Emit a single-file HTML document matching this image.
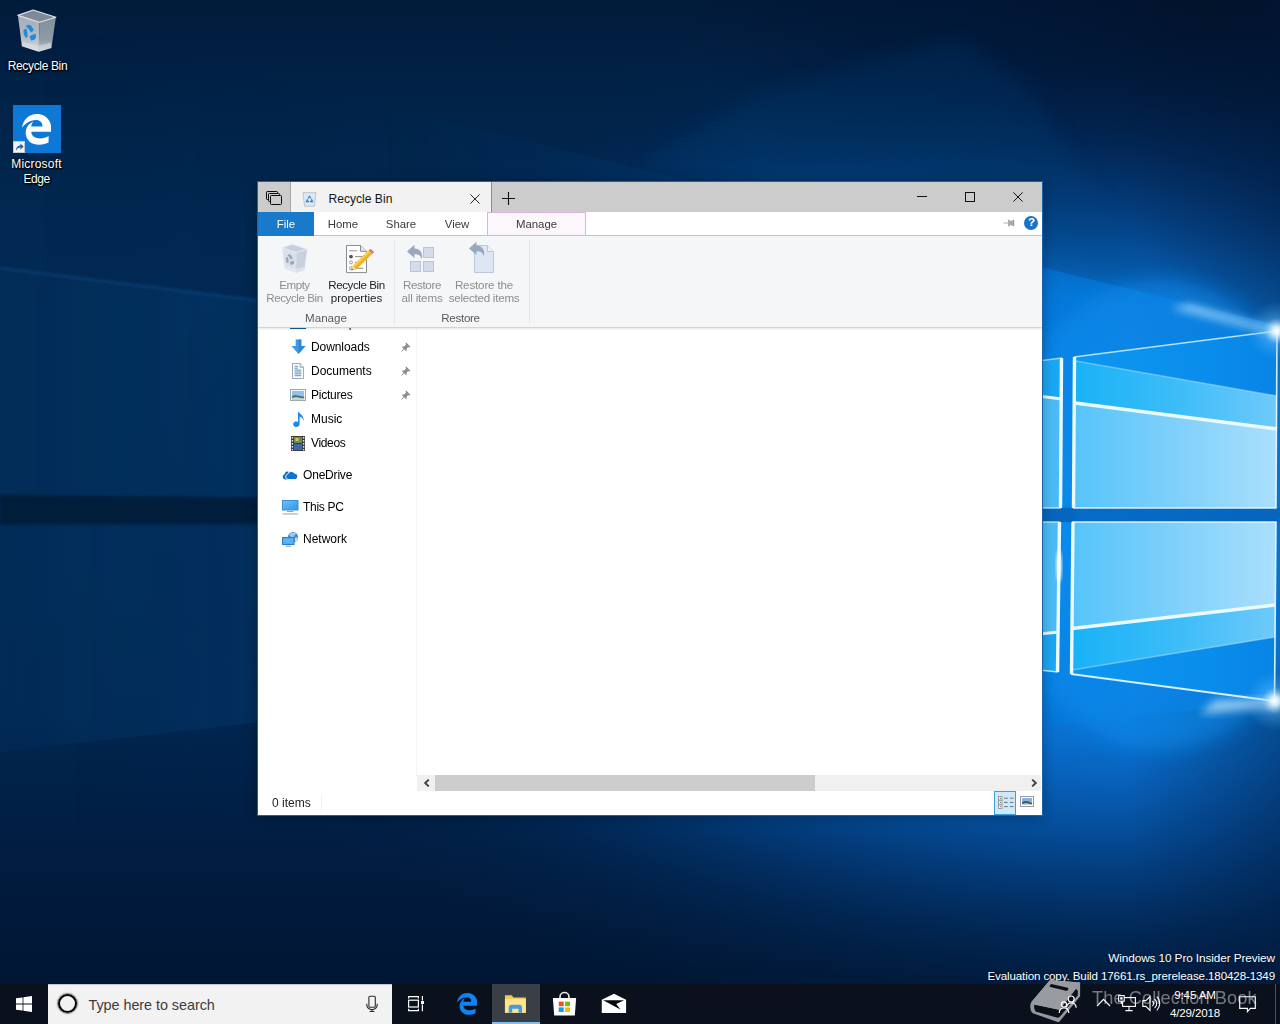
<!DOCTYPE html>
<html lang="en">
<head>
<meta charset="utf-8">
<title>Recycle Bin</title>
<style>
html,body{margin:0;padding:0;}
body{width:1280px;height:1024px;overflow:hidden;position:relative;background:#04244f;font-family:"Liberation Sans",sans-serif;font-size:12px;color:#000;}
.abs{position:absolute;}
.t{position:absolute;white-space:nowrap;line-height:1;}
.c{text-align:center;}
#wall{position:absolute;left:0;top:0;width:1280px;height:1024px;}
/* desktop icons */
.dlabel{position:absolute;color:#fff;text-align:center;white-space:nowrap;font-size:12px;line-height:15.5px;text-shadow:0 1px 2px rgba(0,0,0,.9),0 0 3px rgba(0,0,0,.7),1px 1px 1px rgba(0,0,0,.8);}
/* window */
#win{position:absolute;left:257px;top:181px;width:784px;height:633px;border:1px solid #1c62a8;background:#fff;overflow:hidden;box-shadow:0 1px 12px rgba(0,0,0,.28);}
#titlebar{position:absolute;left:0;top:0;width:784px;height:30px;background:#cccccc;}
#tabstrip{position:absolute;left:0;top:30px;width:784px;height:23px;background:#fff;}
#ribbonline{position:absolute;left:56px;top:53px;width:728px;height:1px;background:#dcb0e2;}
#ribbon{position:absolute;left:0;top:54px;width:784px;height:91px;background:#f5f6f7;border-bottom:1px solid #d3d4d5;}
#ribbonshadow{position:absolute;left:0;top:146px;width:784px;height:3px;background:linear-gradient(rgba(0,0,0,.09),rgba(0,0,0,.03) 50%,rgba(0,0,0,0));}
.rtab{position:absolute;top:30px;height:23px;line-height:24px;font-size:11.4px;color:#3a3a3a;text-align:center;}
.rbtxt{position:absolute;text-align:center;white-space:nowrap;font-size:11.6px;line-height:13px;color:#8d8d8d;}
.glabel{position:absolute;text-align:center;white-space:nowrap;font-size:11.6px;color:#5a5a5a;line-height:13px;}
.nav{position:absolute;white-space:nowrap;font-size:12px;line-height:14px;color:#000;}
/* taskbar */
#taskbar{position:absolute;left:0;top:984px;width:1280px;height:40px;background:#0a111c;}
#search{position:absolute;left:48px;top:0;width:344px;height:40px;background:#f2f2f2;}
</style>
</head>
<body>
<svg id="wall" width="1280" height="1024" viewBox="0 0 1280 1024">
<defs>
<linearGradient id="base" x1="0" y1="0" x2="0" y2="1024" gradientUnits="userSpaceOnUse">
<stop offset="0" stop-color="#011b3b"/><stop offset="0.1" stop-color="#012348"/><stop offset="0.2" stop-color="#012850"/><stop offset="0.3" stop-color="#012a53"/><stop offset="0.5" stop-color="#012a54"/><stop offset="0.7" stop-color="#012750"/><stop offset="0.8" stop-color="#011f44"/><stop offset="0.96" stop-color="#011634"/><stop offset="1" stop-color="#011634"/>
</linearGradient>
<radialGradient id="corner" cx="1210" cy="0" r="520" gradientUnits="userSpaceOnUse" gradientTransform="translate(1210 0) scale(1 0.6) translate(-1210 0)">
<stop offset="0" stop-color="#010f24" stop-opacity=".7"/><stop offset="0.45" stop-color="#011230" stop-opacity=".5"/><stop offset="0.75" stop-color="#011230" stop-opacity=".28"/><stop offset="1" stop-color="#011330" stop-opacity="0"/>
</radialGradient>
<radialGradient id="glow" cx="1130" cy="515" r="530" gradientUnits="userSpaceOnUse" gradientTransform="translate(1130 515) scale(1.9 1) translate(-1130 -515)">
<stop offset="0" stop-color="#0a8aea"/><stop offset="0.3" stop-color="#0b7ee2"/><stop offset="0.42" stop-color="#0a70d0"/><stop offset="0.5" stop-color="#0861ba"/><stop offset="0.595" stop-color="#054d9a"/><stop offset="0.69" stop-color="#033b7a" stop-opacity=".95"/><stop offset="0.78" stop-color="#022d60" stop-opacity=".8"/><stop offset="0.88" stop-color="#01244e" stop-opacity=".45"/><stop offset="1" stop-color="#012248" stop-opacity="0"/>
</radialGradient>
<linearGradient id="fadeR" x1="1130" y1="0" x2="1280" y2="0" gradientUnits="userSpaceOnUse">
<stop offset="0" stop-color="#011a3c" stop-opacity="0"/><stop offset="1" stop-color="#011a3c" stop-opacity=".42"/>
</linearGradient>
<linearGradient id="sheetU" x1="0" y1="0" x2="1100" y2="0" gradientUnits="userSpaceOnUse">
<stop offset="0" stop-color="#02386c" stop-opacity=".2"/><stop offset="0.45" stop-color="#06488a" stop-opacity=".45"/><stop offset="0.8" stop-color="#0c6cc8" stop-opacity=".45"/><stop offset="1" stop-color="#1088ee" stop-opacity=".4"/>
</linearGradient>
<linearGradient id="sheetL" x1="0" y1="0" x2="1100" y2="0" gradientUnits="userSpaceOnUse">
<stop offset="0" stop-color="#02366a" stop-opacity=".22"/><stop offset="0.45" stop-color="#06468a" stop-opacity=".4"/><stop offset="0.8" stop-color="#0c6cc8" stop-opacity=".4"/><stop offset="1" stop-color="#1088ee" stop-opacity=".35"/>
</linearGradient>
<linearGradient id="wedgeU" x1="0" y1="0" x2="1280" y2="0" gradientUnits="userSpaceOnUse">
<stop offset="0" stop-color="#03386e" stop-opacity="0"/><stop offset="0.3" stop-color="#03386e" stop-opacity=".05"/><stop offset="0.5" stop-color="#043c78" stop-opacity=".5"/><stop offset="0.78" stop-color="#0a6cc8" stop-opacity=".55"/><stop offset="1" stop-color="#0e86ea" stop-opacity=".7"/>
</linearGradient>
<linearGradient id="bandg" x1="0" y1="0" x2="1075" y2="0" gradientUnits="userSpaceOnUse">
<stop offset="0" stop-color="#011632" stop-opacity=".8"/><stop offset="0.55" stop-color="#011a3c" stop-opacity=".75"/><stop offset="1" stop-color="#0650a4" stop-opacity=".7"/>
</linearGradient>
<linearGradient id="zLight" x1="1072" y1="0" x2="1277" y2="0" gradientUnits="userSpaceOnUse">
<stop offset="0" stop-color="#56c4fa"/><stop offset="0.5" stop-color="#7ed0fb"/><stop offset="1" stop-color="#abdffd"/>
</linearGradient>
<linearGradient id="zMid" x1="1072" y1="0" x2="1277" y2="0" gradientUnits="userSpaceOnUse">
<stop offset="0" stop-color="#18b2f6"/><stop offset="0.5" stop-color="#3cbcf8"/><stop offset="1" stop-color="#6ecafa"/>
</linearGradient>
<linearGradient id="zDark" x1="1072" y1="0" x2="1277" y2="0" gradientUnits="userSpaceOnUse">
<stop offset="0" stop-color="#0c98f0"/><stop offset="0.6" stop-color="#0a8eec"/><stop offset="1" stop-color="#0884e6"/>
</linearGradient>
<radialGradient id="flare"><stop offset="0" stop-color="#fff" stop-opacity="1"/><stop offset="0.15" stop-color="#e2f5ff" stop-opacity=".9"/><stop offset="0.45" stop-color="#7cc8ff" stop-opacity=".35"/><stop offset="1" stop-color="#49b0ff" stop-opacity="0"/></radialGradient>
<filter id="b1" x="-5%" y="-30%" width="110%" height="160%"><feGaussianBlur stdDeviation="0.7"/></filter>
<filter id="b2" x="-10%" y="-30%" width="120%" height="160%"><feGaussianBlur stdDeviation="1.6"/></filter>
<filter id="b4" x="-10%" y="-30%" width="120%" height="160%"><feGaussianBlur stdDeviation="4"/></filter>
<filter id="b10" x="-20%" y="-40%" width="140%" height="180%"><feGaussianBlur stdDeviation="10"/></filter>
<linearGradient id="wedgeR" x1="860" y1="0" x2="1280" y2="0" gradientUnits="userSpaceOnUse">
<stop offset="0" stop-color="#0c84ea" stop-opacity="0"/><stop offset="0.45" stop-color="#0c84ea" stop-opacity=".3"/><stop offset="1" stop-color="#0c84ea" stop-opacity=".42"/>
</linearGradient>
</defs>
<rect width="1280" height="1024" fill="url(#base)"/>
<!-- main glow -->
<rect width="1280" height="1024" fill="url(#glow)"/>
<rect x="1130" width="150" height="1024" fill="url(#fadeR)"/>
<rect width="1280" height="320" fill="url(#corner)"/>
<!-- secondary faint beam above -->
<polygon points="1043,268 1160,296 1030,90 960,40 760,90 640,166" fill="#05447e" opacity=".22" filter="url(#b10)"/>
<!-- wedge below the outer upper line (0,12)->(1277,325) down to the sheet -->
<polygon points="0,12 1277,325 1277,430 0,268" fill="url(#wedgeU)" opacity=".55" filter="url(#b1)"/>
<!-- wedge above the outer lower line -->
<polygon points="0,834 1275,701 1277,606 0,752" fill="url(#wedgeU)" opacity=".38" filter="url(#b1)"/>
<!-- light sheet -->
<polygon points="0,268 1100,405 1100,508 0,494" fill="url(#sheetU)" filter="url(#b1)"/>
<polygon points="0,526 1100,522 1100,626 0,752" fill="url(#sheetL)" filter="url(#b1)"/>
<line x1="0" y1="268" x2="1075" y2="402" stroke="#2a7cd0" stroke-width="2" opacity=".26" filter="url(#b2)"/>
<!-- mullion shadow band -->
<polygon points="0,495 1075,507 1075,522 0,524" fill="url(#bandg)" filter="url(#b2)"/>
<polygon points="1277,325 860,223 860,420 1277,420" fill="url(#wedgeR)" filter="url(#b1)"/>
<polygon points="1275,702 860,745 860,620 1277,620" fill="url(#wedgeR)" opacity=".8" filter="url(#b1)"/>
<!-- bright azure immediately around the logo -->
<ellipse cx="1160" cy="515" rx="170" ry="235" fill="#0a8cec" opacity=".55" filter="url(#b10)"/>
<!-- logo panes -->
<g>
<!-- upper right -->
<polygon points="1074,357 1277,331 1276,508 1073,508" fill="url(#zLight)"/>
<polygon points="1074,357 1277,331 1277,429 1075,403" fill="url(#zMid)"/>
<polygon points="1074,357 1277,331 1277,396 1076,361" fill="url(#zDark)"/>
<!-- lower right -->
<polygon points="1072,522 1276,522 1274,701 1071,674" fill="url(#zLight)"/>
<polygon points="1072,628.5 1275,605 1274,701 1071,674" fill="url(#zMid)"/>
<polygon points="1072,670 1275,637 1274,701 1071,674" fill="url(#zDark)"/>
<!-- left slivers -->
<polygon points="1030,362 1062,358 1061,508 1030,508" fill="#4cbcf8"/>
<polygon points="1030,362 1062,358 1062,399 1030,395" fill="#1aa8f4"/>
<polygon points="1030,522 1060,522 1058,672 1030,669" fill="#4cbcf8"/>
<polygon points="1030,635 1059,632 1058,672 1030,669" fill="#1aa8f4"/>
<!-- mullions -->
<polygon points="1030,508 1280,508 1280,522 1030,522" fill="#0660b8" opacity=".75"/>
</g>
<!-- edge glows -->
<g fill="none" stroke="#eafaff" filter="url(#b1)">
<polyline points="1074.5,357 1073.5,508" stroke-width="3.4"/>
<polyline points="1073,522 1071.5,674" stroke-width="3.4"/>
<polyline points="1074,357 1277,331" stroke-width="1.6" opacity=".75"/>
<polyline points="1277,331 1276,508 1073,508" stroke-width="1.6" opacity=".9"/>
<polyline points="1072,522 1276,522 1274.5,701" stroke-width="1.6" opacity=".9"/>
<polyline points="1071,674 1274,701" stroke-width="2" opacity=".9"/>
<polyline points="1030,362 1062,358" stroke-width="1.4" opacity=".6"/>
<polyline points="1061.5,358 1060.5,508" stroke-width="3.4"/>
<polyline points="1061,508 1030,508" stroke-width="1.4" opacity=".8"/>
<polyline points="1030,522 1060,522" stroke-width="1.4" opacity=".8"/>
<polyline points="1059.5,522 1057.5,672" stroke-width="3.4"/>
<polyline points="1058,672 1030,669" stroke-width="1.6" opacity=".8"/>
<line x1="1075" y1="403" x2="1277" y2="429" stroke-width="3.6"/>
<line x1="1072" y1="628.5" x2="1275" y2="605" stroke-width="3.6"/>
<line x1="1076" y1="361" x2="1277" y2="396" stroke-width="1.6" opacity=".35"/>
<line x1="1072" y1="670" x2="1275" y2="637" stroke-width="1.6" opacity=".35"/>
<line x1="1030" y1="395" x2="1062" y2="399" stroke-width="3"/>
<line x1="1030" y1="635" x2="1059" y2="632" stroke-width="3"/>
</g>
<ellipse cx="1059" cy="566" rx="3" ry="16" fill="#fff" opacity=".8" filter="url(#b2)"/>
<!-- corner flares + streaks -->
<polygon points="1277,329 1190,304 1170,308 1277,335" fill="#d8f0ff" opacity=".6" filter="url(#b4)"/>
<polygon points="1275,699 1215,700 1200,714 1275,707" fill="#d8f0ff" opacity=".65" filter="url(#b4)"/>
<circle cx="1277" cy="331" r="30" fill="url(#flare)"/>
<circle cx="1275" cy="701" r="30" fill="url(#flare)"/>
</svg>
<!-- Recycle Bin desktop icon: x 17..56, y 10..52 -->
<svg class="abs" style="left:10px;top:4px" width="56" height="54" viewBox="0 0 1062 1024">
 <defs>
  <linearGradient id="rbL" x1="0" y1="0" x2="0" y2="1"><stop offset="0" stop-color="#aab3bd"/><stop offset=".6" stop-color="#b9c0c8"/><stop offset="1" stop-color="#dcdfe2"/></linearGradient>
  <linearGradient id="rbR" x1="0" y1="0" x2="0" y2="1"><stop offset="0" stop-color="#8793a0"/><stop offset=".65" stop-color="#939eaa"/><stop offset="1" stop-color="#cdd2d6"/></linearGradient>
 </defs>
 <polygon points="150,215 440,115 870,250 560,345" fill="#7f8a98"/>
 <polygon points="150,215 560,345 545,905 225,800" fill="url(#rbL)" opacity=".97"/>
 <polygon points="560,345 870,250 785,835 545,905" fill="url(#rbR)" opacity=".97"/>
 <polygon points="240,720 545,790 770,735 785,835 545,905 225,800" fill="#e6e8ea" opacity=".45"/>
 <polygon points="150,215 440,115 870,250 560,345" fill="none" stroke="#dfe4e8" stroke-width="22" stroke-linejoin="round"/>
 <g fill="#1f8bd9">
  <path d="M300 420 Q345 375 400 410 L455 500 L400 540 L350 470 Z"/>
  <path d="M255 500 Q285 455 320 480 L335 600 Q330 650 295 640 Q250 590 255 500 Z"/>
  <path d="M370 610 L470 565 Q500 575 490 640 Q470 690 400 690 Z"/>
 </g>
</svg>
<div class="dlabel" style="left:-2.5px;top:58.5px;width:80px;letter-spacing:-.35px">Recycle Bin</div>
<!-- Edge desktop icon -->
<div class="abs" style="left:13px;top:105px;width:48px;height:48px;background:#0d78d6"></div>
<svg class="abs" style="left:21.9px;top:114px" width="29.3" height="30.8" viewBox="25 8 462 496" preserveAspectRatio="none"><path fill="#fff" d="M25.71 228.16l.35-.48c0 .16 0 .32-.07.48zm460.58 15.51c0-44-7.76-84.46-28.81-122.4C416.5 47.88 343.91 8 258.89 8 119 7.72 40.62 113.21 26.06 227.68c42.42-61.31 117.07-121.38 220.37-125 0 0 109.67 0 99.42 105H170c6.37-37.39 18.55-59 34.34-78.93-75.05 34.9-121.85 96.1-120.75 188.32.83 71.45 50.13 144.84 120.75 172 83.35 31.84 192.77 7.2 240.13-21.33V363.31C363.6 419.8 173.6 424.23 172.21 295.74H486.29V243.67z"/></svg>
<div class="abs" style="left:13px;top:141px;width:12px;height:12px;background:#f4f4f4;border:1px solid #c8c8c8;box-sizing:border-box"></div>
<svg class="abs" style="left:14px;top:142px" width="10" height="10" viewBox="0 0 10 10"><path d="M2 9 C2 5 4 3.6 6.4 3.6 V1.4 L9.6 4.6 L6.4 7.8 V5.6 C4.6 5.6 3 6.4 2 9 Z" fill="#1d5fb4"/></svg>
<div class="dlabel" style="left:-3.5px;top:156.5px;width:80px"><span style="letter-spacing:.19px">Microsoft</span><br><span style="letter-spacing:-.45px">Edge</span></div>
<!-- build watermark text -->
<div class="t" id="wm1" style="right:5px;top:952.5px;font-size:11.8px;color:#fff;letter-spacing:-.1px;text-shadow:0 0 2px rgba(0,0,0,.5)">Windows 10 Pro Insider Preview</div>
<div class="t" id="wm2" style="right:5px;top:970.2px;font-size:11.6px;color:#fff;letter-spacing:-.125px;text-shadow:0 0 2px rgba(0,0,0,.5)">Evaluation copy. Build 17661.rs_prerelease.180428-1349</div>
<div id="win">
 <div id="titlebar">
  <!-- sets button: page x 266..282, y 191..205 -->
  <svg class="abs" style="left:8px;top:9px" width="17" height="15" viewBox="0 0 17 15"><g fill="#cccccc" stroke="#0a0a0a" stroke-width="1"><rect x=".5" y=".5" width="11" height="8" rx=".8"/><rect x="2.5" y="2.5" width="11" height="8" rx=".8"/><rect x="4.5" y="4.5" width="11" height="9" rx=".8"/></g></svg>
  <div class="abs" style="left:32px;top:0;width:1px;height:30px;background:#a6a6a6"></div>
  <div class="abs" style="left:33px;top:0;width:200px;height:30px;background:#f2f2f2"></div>
  <div class="abs" style="left:233px;top:0;width:1px;height:30px;background:#8f8f8f"></div>
  <!-- small recycle bin icon: page x 302..316, y 192..206 -->
  <svg class="abs" style="left:44px;top:10px" width="15" height="15" viewBox="0 0 15 15"><polygon points="1,0.6 14,0.6 12.4,14.2 2.6,14.2" fill="#dde8f2" stroke="#b4c2cf" stroke-width=".9"/><g fill="#2a7dbd"><path d="M7.5 3.2 L9.6 6.6 L8.3 6.6 L7.5 5.2 L6.7 6.6 L5.4 6.6 Z"/><path d="M4.9 7.3 L6.2 7.3 L5.5 8.7 L7 8.7 L7 10.2 L3.6 10.2 Z"/><path d="M10.1 7.3 L11.4 10.2 L8 10.2 L8 8.7 L9.5 8.7 L8.8 7.3 Z"/></g></svg>
  <div class="t" style="left:70.5px;top:11px;font-size:12.1px;color:#161616">Recycle Bin</div>
  <svg class="abs" style="left:212px;top:12px" width="10" height="10" viewBox="0 0 10 10"><path d="M.4 .4 L9.6 9.6 M9.6 .4 L.4 9.6" stroke="#1a1a1a" stroke-width=".95" fill="none"/></svg>
  <svg class="abs" style="left:244px;top:10px" width="13" height="13" viewBox="0 0 13 13"><path d="M6.5 0 V13 M0 6.5 H13" stroke="#111" stroke-width="1.1" fill="none"/></svg>
  <!-- caption buttons -->
  <div class="abs" style="left:659px;top:14px;width:10px;height:1px;background:#111"></div>
  <div class="abs" style="left:707px;top:10px;width:8px;height:8px;border:1px solid #111"></div>
  <svg class="abs" style="left:755px;top:10px" width="10" height="10" viewBox="0 0 10 10"><path d="M.4 .4 L9.6 9.6 M9.6 .4 L.4 9.6" stroke="#111" stroke-width="1" fill="none"/></svg>
 </div>
 <div id="tabstrip"></div>
 <div class="rtab" style="left:0;width:56px;background:#1979ca;color:#fff;height:24px">File</div>
 <div class="rtab" style="left:56px;width:58px">Home</div>
 <div class="rtab" style="left:114px;width:58px">Share</div>
 <div class="rtab" style="left:172px;width:54px">View</div>
 <div class="rtab" style="left:229px;width:99px;height:23px;line-height:22.5px;background:#fbf7fc;border:1px solid #dcb4e2;border-bottom:none;box-sizing:border-box">Manage</div>
 <!-- pin + help -->
 <svg class="abs" style="left:745px;top:36.5px" width="12" height="8" viewBox="0 0 14 10"><path d="M0 5 H6" stroke="#9a9a9a" stroke-width="1"/><rect x="6" y="1" width="2" height="8" fill="#9a9a9a"/><polygon points="8,2.5 12,1.5 12,8.5 8,7.5" fill="#a8a8a8"/><rect x="12" y="1" width="1.5" height="8" fill="#9a9a9a"/></svg>
 <div class="abs" style="left:766px;top:34px;width:14px;height:14px;border-radius:7px;background:#1a74c4;"></div>
 <div class="t" style="left:770px;top:35px;font-size:11.5px;font-weight:bold;color:#fff">?</div>
 <div id="ribbonline"></div>
 <!-- nav pane; coordinates inside #win: origin page (258,182) -->
 <div id="nav" class="abs" style="left:0;top:0;width:784px;height:633px;">
  <div class="abs" style="left:158px;top:146px;width:1px;height:448px;background:#f5f5f5"></div>
  <!-- Desktop row (mostly hidden under ribbon) -->
  <div class="abs" style="left:32px;top:134px;width:16px;height:12px;background:#2e8bd8;border-bottom:1px solid #0f5f8c"></div>
  <div class="nav" style="left:53.5px;top:133.5px">Desktop</div>
  <!-- Downloads -->
  <svg class="abs" style="left:32.5px;top:157px" width="15" height="16" viewBox="0 0 16 18" preserveAspectRatio="none"><path d="M5 0.5 H11 V8 H15.5 L8 17 L0.5 8 H5 Z" fill="#3f9ae6"/><path d="M8 0.5 H11 V8 H15.5 L8 17 Z" fill="#2580d6" opacity=".75"/></svg>
  <div class="nav" style="left:53px;top:158px;letter-spacing:-.08px">Downloads</div>
  <!-- Documents -->
  <svg class="abs" style="left:34px;top:181px" width="12" height="16" viewBox="0 0 14 17" preserveAspectRatio="none"><path d="M.5 .5 H9.5 L13.5 4.5 V16.5 H.5 Z" fill="#fff" stroke="#8f9aa6" stroke-width="1"/><path d="M9.5 .5 V4.5 H13.5" fill="#e6eaee" stroke="#8f9aa6" stroke-width="1"/><g stroke="#3c86c8" stroke-width="1"><path d="M3 3.5 H7"/><path d="M3 5.5 H7"/><path d="M3 7.5 H11"/><path d="M3 9.5 H11"/><path d="M3 11.5 H11"/><path d="M3 13.5 H11"/></g></svg>
  <div class="nav" style="left:53px;top:182px">Documents</div>
  <!-- Pictures -->
  <svg class="abs" style="left:32px;top:207px" width="16" height="12" viewBox="0 0 17 13" preserveAspectRatio="none"><rect x=".5" y=".5" width="16" height="12" fill="#fff" stroke="#9aa3ad"/><rect x="2" y="2" width="13" height="9" fill="#8ec3ea"/><path d="M2 8 C5 5.5 8 7 15 8.5 V11 H2 Z" fill="#4c6a6e"/><path d="M2 9.5 C6 8 10 9.5 15 10 V11 H2 Z" fill="#c8d4d0"/></svg>
  <div class="nav" style="left:53px;top:206px;letter-spacing:-.24px">Pictures</div>
  <!-- Music -->
  <svg class="abs" style="left:34.5px;top:228px" width="13" height="18" viewBox="0 0 13 18"><path d="M5 1 C6 4 11.5 5 10.5 11 C10 8 8 7 6.6 6.8 V14.2 A3.2 2.8 0 1 1 5 11.8 Z" fill="#1e8ae6"/></svg>
  <div class="nav" style="left:53px;top:230px">Music</div>
  <!-- Videos -->
  <svg class="abs" style="left:33px;top:254px" width="14" height="15" viewBox="0 0 14 15"><rect width="14" height="15" fill="#3a3a3a"/><rect x="3" y="1" width="8" height="6" fill="#6a8f4a"/><rect x="3" y="8" width="8" height="6" fill="#3f66b0"/><rect x="4.5" y="2" width="3" height="3" fill="#d8c460"/><g fill="#e8e8e8"><rect x=".7" y="1" width="1.4" height="1.6"/><rect x=".7" y="4" width="1.4" height="1.6"/><rect x=".7" y="7" width="1.4" height="1.6"/><rect x=".7" y="10" width="1.4" height="1.6"/><rect x=".7" y="13" width="1.4" height="1.3"/><rect x="11.9" y="1" width="1.4" height="1.6"/><rect x="11.9" y="4" width="1.4" height="1.6"/><rect x="11.9" y="7" width="1.4" height="1.6"/><rect x="11.9" y="10" width="1.4" height="1.6"/><rect x="11.9" y="13" width="1.4" height="1.3"/></g></svg>
  <div class="nav" style="left:53px;top:254px;letter-spacing:-.35px">Videos</div>
  <!-- pins -->
  <svg class="abs pin" style="left:143px;top:160px" width="10" height="10" viewBox="0 0 10 10"><path d="M5.2 .6 L9.4 4.8 L8.4 5.4 L7.2 5 L5.6 6.8 L5.6 8.6 L4.8 9 L1 5.2 L1.4 4.4 L3.2 4.4 L5 2.8 L4.6 1.6 Z" fill="#8c8c8c"/><path d="M2.8 7.2 L.5 9.5" stroke="#8c8c8c" stroke-width="1"/></svg>
  <svg class="abs pin" style="left:143px;top:184px" width="10" height="10" viewBox="0 0 10 10"><path d="M5.2 .6 L9.4 4.8 L8.4 5.4 L7.2 5 L5.6 6.8 L5.6 8.6 L4.8 9 L1 5.2 L1.4 4.4 L3.2 4.4 L5 2.8 L4.6 1.6 Z" fill="#8c8c8c"/><path d="M2.8 7.2 L.5 9.5" stroke="#8c8c8c" stroke-width="1"/></svg>
  <svg class="abs pin" style="left:143px;top:208px" width="10" height="10" viewBox="0 0 10 10"><path d="M5.2 .6 L9.4 4.8 L8.4 5.4 L7.2 5 L5.6 6.8 L5.6 8.6 L4.8 9 L1 5.2 L1.4 4.4 L3.2 4.4 L5 2.8 L4.6 1.6 Z" fill="#8c8c8c"/><path d="M2.8 7.2 L.5 9.5" stroke="#8c8c8c" stroke-width="1"/></svg>
  <!-- OneDrive -->
  <svg class="abs" style="left:24px;top:287px" width="17" height="11" viewBox="0 0 17 11"><path d="M3.2 10.4 A2.6 2.6 0 0 1 2.6 5.3 A3.3 3.3 0 0 1 6.6 2.6 L5.4 10.4 Z" fill="#0e6ac4"/><path d="M6.4 10.5 A2.7 2.7 0 0 1 5.6 5.2 A3.9 3.9 0 0 1 12.6 4.2 A3.2 3.2 0 0 1 13.4 10.5 Z" fill="#1273cf" stroke="#fff" stroke-width=".9"/></svg>
  <div class="nav" style="left:45px;top:286px;letter-spacing:-.19px">OneDrive</div>
  <!-- This PC -->
  <svg class="abs" style="left:24px;top:318px" width="17" height="15" viewBox="0 0 17 15"><defs><linearGradient id="pcg" x1="0" y1="0" x2="1" y2="1"><stop offset="0" stop-color="#6cc2f7"/><stop offset="1" stop-color="#2f98e6"/></linearGradient></defs><rect x=".5" y=".5" width="15.5" height="9.5" fill="url(#pcg)" stroke="#3b8fd2" stroke-width="1"/><rect x="5" y="11" width="6.5" height="1" fill="#9aa0a6"/><rect x=".5" y="13.4" width="15.5" height="1.1" fill="#a9a9a9"/></svg>
  <div class="nav" style="left:45px;top:318px;letter-spacing:-.3px">This PC</div>
  <!-- Network -->
  <svg class="abs" style="left:24px;top:349px" width="17" height="16" viewBox="0 0 17 16"><circle cx="11" cy="6.2" r="5.2" fill="#4a8fd0"/><path d="M7 3.4 C9 1.6 12 1.2 14.4 2.6 C12.6 3.6 11.2 5.8 11.4 8 C9.6 6 8 5.4 7 3.4 Z" fill="#9ccbf0"/><path d="M12.6 7 C14 6 15.6 6.4 16 7.6 C15.6 9.4 14.4 10.6 13 11 Z" fill="#b8dcf5"/><rect x=".5" y="6.5" width="11.5" height="7" fill="#45a6ee" stroke="#2f7fc4"/><rect x="1.5" y="7.5" width="9.5" height="5" fill="#5ab4f3"/><rect x="3.6" y="14.6" width="5.4" height="1" fill="#8e979f"/></svg>
  <div class="nav" style="left:45px;top:350px">Network</div>
  <!-- horizontal scrollbar -->
  <div class="abs" style="left:159px;top:593px;width:624px;height:16px;background:#f0f0f0"></div>
  <div class="abs" style="left:177px;top:593px;width:380px;height:16px;background:#cdcdcd"></div>
  <svg class="abs" style="left:164.5px;top:597px" width="8" height="8" viewBox="0 0 8 8"><path d="M5.8 .6 L2.2 4 L5.8 7.4" stroke="#404040" stroke-width="1.9" fill="none"/></svg>
  <svg class="abs" style="left:772px;top:597px" width="8" height="8" viewBox="0 0 8 8"><path d="M2.2 .6 L5.8 4 L2.2 7.4" stroke="#404040" stroke-width="1.9" fill="none"/></svg>
  <!-- status bar -->
  <div class="t" style="left:14px;top:615px;font-size:12px;color:#222">0 items</div>
  <div class="abs" style="left:63px;top:613px;width:1px;height:16px;background:#f0f0f0"></div>
  <div class="abs" style="left:736px;top:609px;width:20px;height:22px;border:1px solid #3b9fd9;background:#cfe9fb"></div>
  <svg class="abs" style="left:740px;top:614.3px" width="16" height="14" viewBox="0 0 16 14"><g fill="#fff" stroke="#8a8a8a" stroke-width=".8"><rect x=".5" y=".5" width="3.5" height="3.5"/><rect x=".5" y="4.7" width="3.5" height="3.5"/><rect x=".5" y="8.9" width="3.5" height="3.5"/></g><g stroke="#6a7680" stroke-width="1"><path d="M6 2.2 H9.8 M11.8 2.2 H15.5 M6 6.4 H9.8 M11.8 6.4 H15.5 M6 10.6 H9.8 M11.8 10.6 H15.5"/></g><g fill="#444"><rect x="1.8" y="1.8" width="1" height="1"/><rect x="1.8" y="6" width="1" height="1"/><rect x="1.8" y="10.2" width="1" height="1"/></g></svg>
  <svg class="abs" style="left:762px;top:614px" width="14" height="11" viewBox="0 0 14 11"><rect x=".5" y=".5" width="13" height="10" fill="#fff" stroke="#9a9aa6"/><rect x="2" y="2" width="10" height="7" fill="#7fb4e6"/><path d="M2 6.5 C5 4 8 5 12 7 V9 H2 Z" fill="#3f5e5a"/><path d="M2 8 C6 6.5 9 8 12 8.2 V9 H2 Z" fill="#c4d0cc"/></svg>
 </div>

 <div id="ribbon">
  <!-- coordinates inside #ribbon: origin page (258,236) -->
  <!-- Empty recycle bin icon (disabled) center page (294,260) -->
  <svg class="abs" style="left:18.8px;top:3.8px" width="36.9" height="37.2" viewBox="0 0 1062 1024" preserveAspectRatio="none">
   <polygon points="150,215 440,115 870,250 560,345" fill="#c6cfde"/>
   <polygon points="150,215 560,345 545,905 225,800" fill="#d9e0ec"/>
   <polygon points="560,345 870,250 785,835 545,905" fill="#c8d1e0"/>
   <polygon points="240,720 545,790 770,735 785,835 545,905 225,800" fill="#e9edf3" opacity=".6"/>
   <polygon points="150,215 440,115 870,250 560,345" fill="none" stroke="#e9eef5" stroke-width="24" stroke-linejoin="round"/>
   <g fill="#9aa6ba">
    <path d="M300 420 Q345 375 400 410 L455 500 L400 540 L350 470 Z"/>
    <path d="M255 500 Q285 455 320 480 L335 600 Q330 650 295 640 Q250 590 255 500 Z"/>
    <path d="M370 610 L470 565 Q500 575 490 640 Q470 690 400 690 Z"/>
   </g>
  </svg>
  <div class="rbtxt" style="left:0px;top:42px;width:73px"><span style="letter-spacing:-.5px">Empty</span><br><span style="letter-spacing:-.44px">Recycle Bin</span></div>
  <!-- Recycle bin properties icon center page (356,260) -->
  <svg class="abs" style="left:85px;top:8px" width="32" height="31" viewBox="0 0 32 32" preserveAspectRatio="none">
   <path d="M3.5 1.5 H17.5 L23.5 7.5 V29.5 H3.5 Z" fill="#fdfdfd" stroke="#8a8a8a" stroke-width="1"/>
   <path d="M17.5 1.5 V7.5 H23.5" fill="#e8e8e8" stroke="#8a8a8a" stroke-width="1"/>
   <path d="M6 7 H14" stroke="#9a9a9a" stroke-width="1"/>
   <circle cx="8" cy="13" r="1.9" fill="#555"/><path d="M12 13 H20" stroke="#8c8c8c" stroke-width="1"/>
   <circle cx="8" cy="19" r="1.5" fill="#fff" stroke="#8c8c8c" stroke-width=".9"/><path d="M12 19 H16" stroke="#8c8c8c" stroke-width="1"/>
   <circle cx="8" cy="25" r="1.5" fill="#fff" stroke="#8c8c8c" stroke-width=".9"/><path d="M14 25 H20" stroke="#8c8c8c" stroke-width="1"/>
   <polygon points="8.2,27.2 9.6,22.8 25.6,6.8 29.2,10.4 13.2,26.2" fill="#f0b323"/>
   <polygon points="9.6,22.8 25.6,6.8 27,8.2 11,24.2" fill="#f8ce5a"/>
   <polygon points="8.2,27.2 9.6,22.8 13.2,26.2" fill="#f3dcb0"/>
   <polygon points="8.2,27.2 8.9,25 10.4,26.5" fill="#555"/>
   <polygon points="25.6,6.8 27.6,4.8 31.2,8.4 29.2,10.4" fill="#e07878"/>
  </svg>
  <div class="rbtxt" style="left:62px;top:42px;width:73px;color:#1e1e1e"><span style="letter-spacing:-.44px">Recycle Bin</span><br><span style="letter-spacing:0">properties</span></div>
  <div class="abs" style="left:136px;top:4px;width:1px;height:84px;background:#e7e8e9"></div>
  <!-- Restore all items -->
  <svg class="abs" style="left:148px;top:7.5px" width="32" height="32" viewBox="0 0 32 32">
   <g fill="#d4dcec" stroke="#b9c4da" stroke-width="1"><rect x="17.5" y="3.5" width="10" height="10"/><rect x="4.5" y="17.5" width="10" height="10"/><rect x="17.5" y="17.5" width="10" height="10"/></g>
   <path d="M1 7.5 L8.5 .8 V4.5 C14 4.5 17 8.5 16 15.5 C14.6 11.5 12.5 10.3 8.5 10.3 V14 Z" fill="#9aa7be"/>
  </svg>
  <div class="rbtxt" style="left:136.5px;top:42px;width:55px"><span style="letter-spacing:-.36px">Restore</span><br><span style="letter-spacing:-.16px">all items</span></div>
  <!-- Restore selected -->
  <svg class="abs" style="left:209.5px;top:5px" width="32" height="34" viewBox="0 0 32 34">
   <path d="M6.5 4.5 H19.5 L25.5 10.5 V31.5 H6.5 Z" fill="#dfe6f3" stroke="#bcc7dc" stroke-width="1"/>
   <path d="M19.5 4.5 V10.5 H25.5" fill="#eef2f9" stroke="#bcc7dc" stroke-width="1"/>
   <path d="M1 7.5 L8.5 .8 V4.5 C14 4.5 17 8.5 16 15.5 C14.6 11.5 12.5 10.3 8.5 10.3 V14 Z" fill="#9aa7be"/>
  </svg>
  <div class="rbtxt" style="left:186px;top:42px;width:80px"><span style="letter-spacing:-.16px">Restore the</span><br><span style="letter-spacing:-.24px">selected items</span></div>
  <div class="abs" style="left:271px;top:4px;width:1px;height:84px;background:#e7e8e9"></div>
  <div class="glabel" style="left:28px;top:75px;width:80px">Manage</div>
  <div class="glabel" style="left:162.5px;top:75px;width:80px;letter-spacing:-.3px">Restore</div>

 </div>
 <div id="ribbonshadow"></div>
</div>
<div id="taskbar">
 <!-- start -->
 <svg class="abs" style="left:16px;top:12px" width="16" height="16" viewBox="0 0 16 16"><path d="M0 2.3 L6.6 1.4 V7.6 H0 Z M7.4 1.3 L16 0 V7.6 H7.4 Z M0 8.4 H6.6 V14.6 L0 13.7 Z M7.4 8.4 H16 V16 L7.4 14.7 Z" fill="#fff"/></svg>
 <div id="search">
  <div class="abs" style="left:0;top:0;width:344px;height:1px;background:#c3c8ce"></div>
  <div class="abs" style="left:9.9px;top:9.8px;width:15.4px;height:15.4px;border:2.4px solid #050505;border-radius:50%;box-shadow:0 0 1.2px .9px rgba(0,0,0,.5)"></div>
  <div class="t" style="left:40.5px;top:13.5px;font-size:14.4px;color:#3c3c3c;letter-spacing:-.05px">Type here to search</div>
  <svg class="abs" style="left:317.6px;top:11px" width="12" height="20" viewBox="0 0 12 20"><rect x="2.9" y="1.2" width="6.4" height="11" rx="1.1" fill="none" stroke="#2b2b2b" stroke-width="1.1"/><path d="M.8 8.8 V10 A5.2 4.6 0 0 0 11.2 10 V8.8 M6 14.6 V16.4 M3.6 16.5 H8.4" fill="none" stroke="#2b2b2b" stroke-width="1.1"/></svg>
 </div>
 <!-- task view -->
 <svg class="abs" style="left:407px;top:11px" width="18" height="17" viewBox="0 0 18 17"><g fill="none" stroke="#fff" stroke-width="1.2"><rect x="1.6" y="5.2" width="9.8" height="6.8"/><path d="M1.6 3.4 V1.6 H11.4 V3.4 M1.6 13.8 V15.6 H11.4 V13.8"/><path d="M15.4 1 V5.4 M15.4 9.6 V16.2"/></g><rect x="14" y="6" width="3" height="3" fill="#fff"/></svg>
 <!-- edge -->
 <svg class="abs" style="left:456.8px;top:9px" width="20.4" height="21.8" viewBox="25 8 462 496" preserveAspectRatio="none"><path fill="#0c84f2" d="M25.71 228.16l.35-.48c0 .16 0 .32-.07.48zm460.58 15.51c0-44-7.76-84.46-28.81-122.4C416.5 47.88 343.91 8 258.89 8 119 7.72 40.62 113.21 26.06 227.68c42.42-61.31 117.07-121.38 220.37-125 0 0 109.67 0 99.42 105H170c6.37-37.39 18.55-59 34.34-78.93-75.05 34.9-121.85 96.1-120.75 188.32.83 71.45 50.13 144.84 120.75 172 83.35 31.84 192.77 7.2 240.13-21.33V363.31C363.6 419.8 173.6 424.23 172.21 295.74H486.29V243.67z"/></svg>
 <!-- explorer active -->
 <div class="abs" style="left:492px;top:0;width:48px;height:40px;background:#3a3e45"></div>
 <div class="abs" style="left:492px;top:38px;width:48px;height:2px;background:#7fc0f3"></div>
 <svg class="abs" style="left:504.4px;top:8.7px" width="22.8" height="22" viewBox="0 0 24 20" preserveAspectRatio="none"><path d="M1 2 H8 L10 4 H23 V18 H1 Z" fill="#f2ca57"/><rect x="1" y="5.4" width="22" height="12.6" fill="#fbe38f"/><path d="M5 18 V13.4 A3 3 0 0 1 8 10.6 H16 A3 3 0 0 1 19 13.4 V18 H15.4 V14.4 H8.6 V18 Z" fill="#3f9be6"/><rect x="1" y="17" width="22" height="1.6" fill="#e7b73a" opacity=".0"/></svg>
 <!-- store -->
 <svg class="abs" style="left:552px;top:7px" width="25" height="26" viewBox="0 0 23 26" preserveAspectRatio="none"><path d="M7.4 7.4 V5.6 A4.1 4.1 0 0 1 15.6 5.6 V7.4" fill="none" stroke="#e8e8e8" stroke-width="1.5"/><path d="M.8 7 H22.2 L21 24.4 H2 Z" fill="#fff"/><rect x="6.2" y="10.6" width="4.6" height="4.6" fill="#f25022"/><rect x="12" y="10.6" width="4.6" height="4.6" fill="#7fba00"/><rect x="6.2" y="16.4" width="4.6" height="4.6" fill="#00a4ef"/><rect x="12" y="16.4" width="4.6" height="4.6" fill="#ffb900"/></svg>
 <!-- mail -->
 <svg class="abs" style="left:596px;top:6px" width="36" height="28" viewBox="0 0 1280 996"><polygon points="205,345 640,135 1070,345 1070,820 205,820" fill="#fff"/><polygon points="255,365 1000,365 720,502 870,690" fill="#05080d"/></svg>
 <!-- Collection Book watermark -->
 <svg class="abs" style="left:1020px;top:-14px" width="80" height="54" viewBox="0 0 1280 864">
 <g opacity=".93">
  <path d="M480 158 L955 198 Q968 205 962 230 L962 420 L630 828 Q612 838 590 828 L205 692 Q150 650 168 545 Q175 520 200 490 Z" fill="#9fa2a8"/>
  <path d="M228 548 Q215 600 248 662 L600 762 Q625 765 645 740 L925 405 L925 330 L895 300 L630 640 Z" fill="#0c1017"/>
  <path d="M480 158 L955 198 Q965 205 955 222 L635 622 Q620 634 600 628 L190 548 Q165 540 185 508 Z" fill="#a3a6ab"/>
  <path d="M500 222 L765 285 Q780 292 772 312 L764 322 Q752 338 735 332 L485 270 Q470 262 478 244 Z" fill="#0c1017"/>
 </g>
</svg>
 <div class="t" style="left:1092px;top:5px;font-size:18.2px;color:#b4b8bf;opacity:.62;letter-spacing:.1px">The Collection Book</div>
 <!-- tray: people -->
 <svg class="abs" style="left:1058px;top:10px" width="20" height="20" viewBox="0 0 20 20"><g fill="none" stroke="#fff" stroke-width="1.2"><circle cx="13.2" cy="5" r="3"/><circle cx="6" cy="10.4" r="2.6"/><path d="M8.6 13.4 C9 10.4 10.8 8.8 13.2 8.8 C16 8.8 18 10.8 18.2 13.8 M1.2 19 C1.4 15.6 3.4 13.8 6 13.8 C8.6 13.8 10.6 15.6 10.8 19"/></g></svg>
 <!-- chevron -->
 <svg class="abs" style="left:1096px;top:14px" width="15" height="9" viewBox="0 0 15 9"><path d="M1 8 L7.5 1.4 L14 8" fill="none" stroke="#fff" stroke-width="1.2"/></svg>
 <!-- network -->
 <svg class="abs" style="left:1118px;top:11px" width="18" height="17" viewBox="0 0 18 17"><g fill="none" stroke="#fff" stroke-width="1.1"><rect x="4.6" y="2.6" width="12.8" height="8.8"/><path d="M11 11.4 V15.4 M7.4 15.6 H14.6"/><rect x=".6" y=".6" width="5.6" height="5.6" fill="#0a111c"/><path d="M3.4 6.2 V8.4 H4.6"/></g><rect x="2.2" y="2.2" width="2.4" height="2.4" fill="#fff"/></svg>
 <!-- volume -->
 <svg class="abs" style="left:1142px;top:11px" width="19" height="17" viewBox="0 0 19 17"><g fill="none" stroke="#fff" stroke-width="1.1"><path d="M.8 5.6 H3.8 L8 1.6 V15.4 L3.8 11.4 H.8 Z"/><path d="M10.4 6 A3.4 3.4 0 0 1 10.4 11 M12.6 3.8 A6.4 6.4 0 0 1 12.6 13.2 M14.8 1.6 A9.6 9.6 0 0 1 14.8 15.4"/></g></svg>
 <!-- clock -->
 <div class="t c" style="left:1160px;top:4.5px;width:70px;font-size:11.6px;color:#fff;letter-spacing:-.15px">9:45 AM</div>
 <div class="t c" style="left:1160px;top:22.5px;width:70px;font-size:11.6px;color:#fff;letter-spacing:-.15px">4/29/2018</div>
 <!-- action center -->
 <svg class="abs" style="left:1239px;top:12px" width="17" height="17" viewBox="0 0 17 17"><path d="M.7 .7 H16.3 V12.3 H11.4 L8.4 15.6 L8.4 12.3 H.7 Z" fill="none" stroke="#fff" stroke-width="1.15"/></svg>
 <div class="abs" style="left:1275px;top:0;width:1px;height:40px;background:#4b5058"></div>
</div>
</body>
</html>
